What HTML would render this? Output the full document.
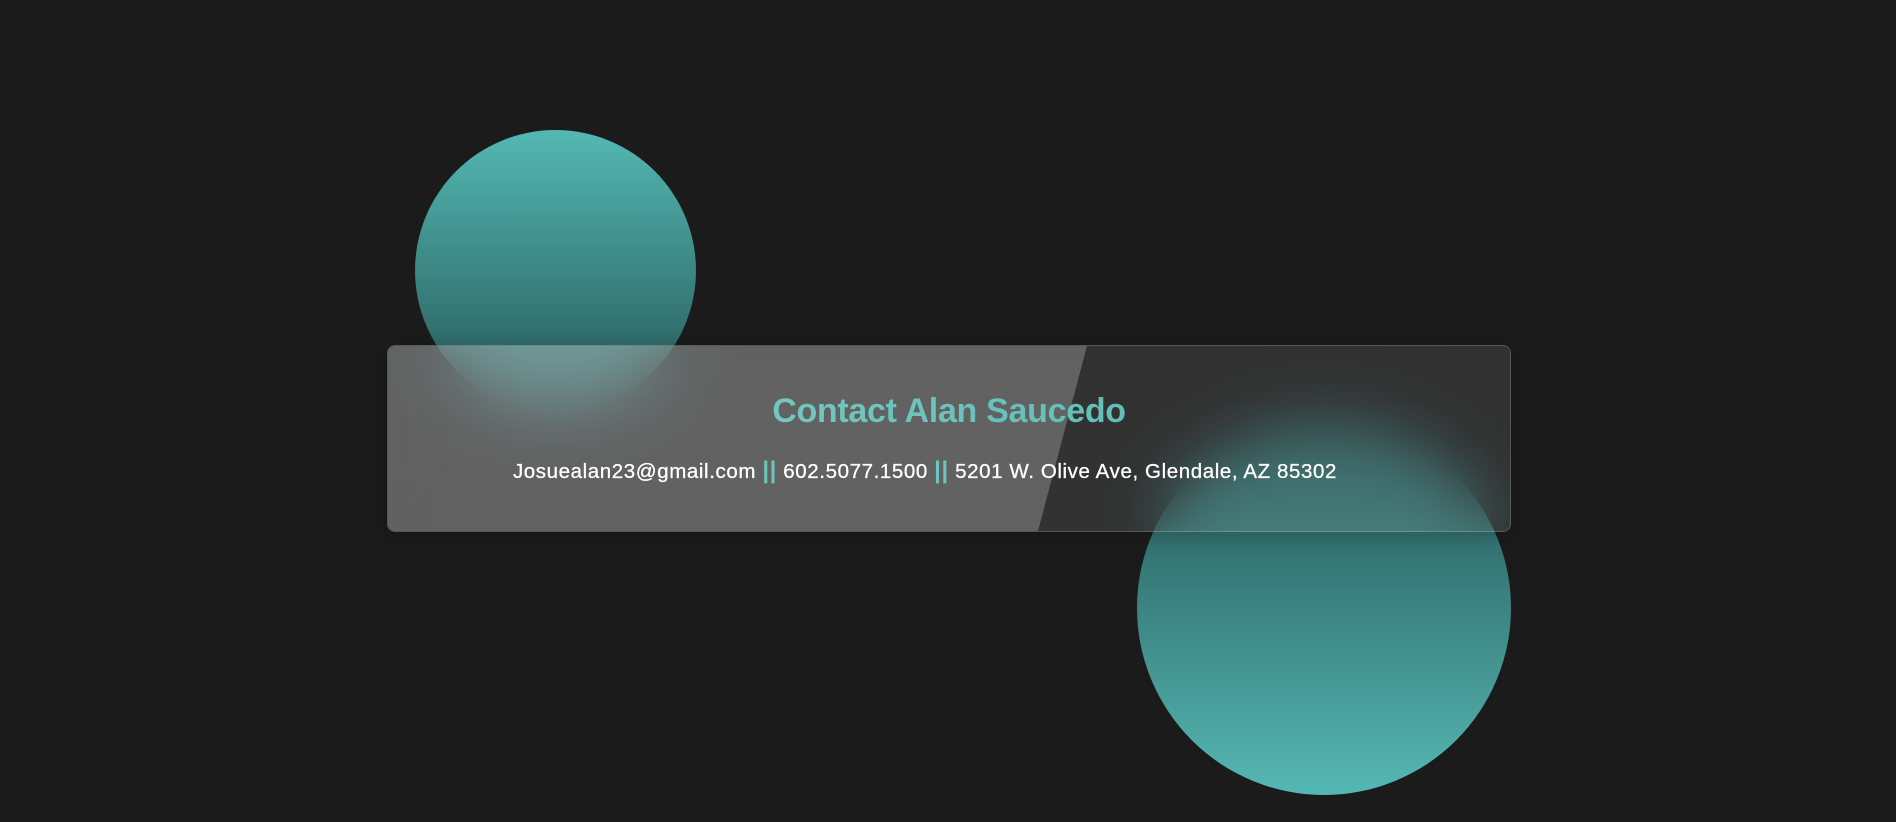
<!DOCTYPE html>
<html><head><style>
html,body{margin:0;padding:0;width:1896px;height:822px;background:#1b1b1b;overflow:hidden;font-family:"Liberation Sans",Arial,sans-serif;}
.c1{position:absolute;left:415px;top:130px;width:281px;height:281px;border-radius:50%;background:linear-gradient(to bottom,#53b8b3,#255554);}
.c2{position:absolute;left:1137px;top:421px;width:374px;height:374px;border-radius:50%;background:linear-gradient(to bottom,#235150,#55b8b4);}
.card{position:absolute;left:387px;top:345px;width:1124px;height:187px;border-radius:8px;background:rgba(255,255,255,0.1);backdrop-filter:blur(30px);-webkit-backdrop-filter:blur(30px);border:1px solid rgba(255,255,255,0.18);box-sizing:border-box;overflow:hidden;box-shadow:0 4px 20px rgba(0,0,0,0.2);}
.card:before{content:"";position:absolute;inset:0;background:rgba(255,255,255,0.24);clip-path:polygon(0 0,699px 0,650px 100%,0 100%);}
.t{position:absolute;left:0;right:0;top:46px;text-align:center;font-size:34px;font-weight:bold;letter-spacing:-0.3px;background:linear-gradient(to right,#86d0c8,#4fb6b0);-webkit-background-clip:text;background-clip:text;color:transparent;}
.l{position:absolute;left:-24px;right:24px;top:114px;text-align:center;font-size:20.5px;color:#fff;letter-spacing:0.6px;-webkit-text-stroke:0.3px #fff;}
.l b{color:#6cc4bd;font-weight:bold;font-size:24px;line-height:20px;-webkit-text-stroke:0;}
</style></head><body>
<div class="c1"></div><div class="c2"></div>
<div class="card"><div class="t">Contact Alan Saucedo</div>
<div class="l">Josuealan23@gmail.com <b>||</b> 602.5077.1500 <b>||</b> 5201 W. Olive Ave, Glendale, AZ 85302</div></div>
</body></html>
